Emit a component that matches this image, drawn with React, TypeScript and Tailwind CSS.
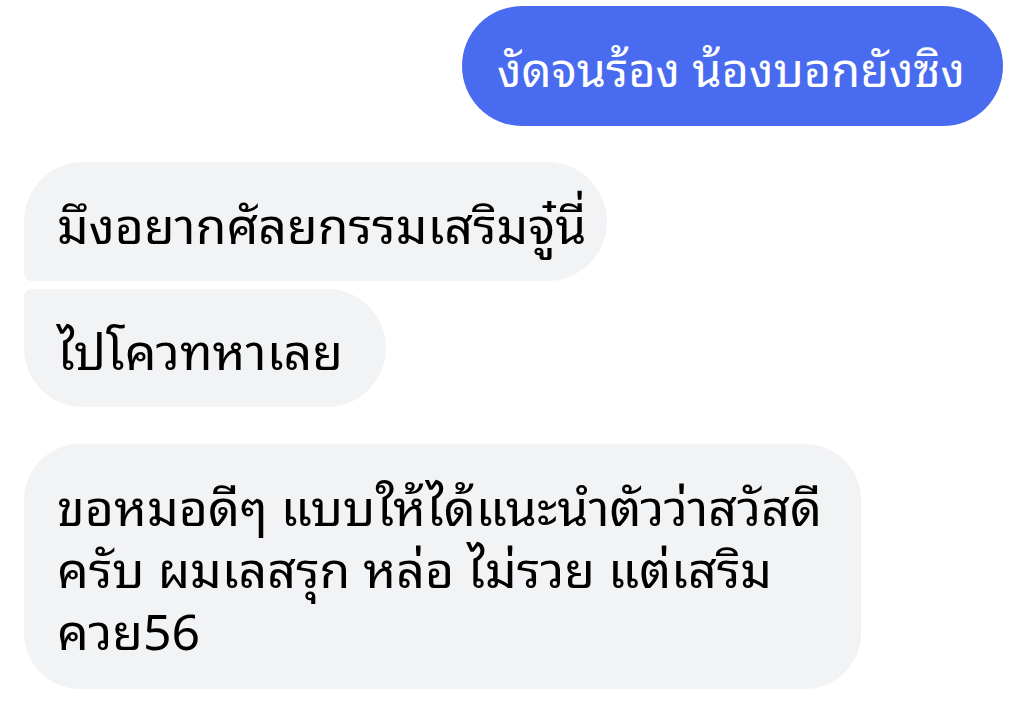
export default function App() {
  return (
    <div
      className="w-[1026px] h-[701px] bg-white overflow-hidden"
      style={{ fontFamily: '"Noto Sans Thai Looped", "Noto Sans Thai", "Noto Sans", sans-serif' }}
    >
      <div className="flex flex-col pt-[6px] px-[24px] pr-[23px]">
        {/* outgoing */}
        <div className="flex justify-end">
          <div className="h-[120px] w-[541px] rounded-[60px] bg-[#486bef] text-white text-[47px] leading-[62px] flex items-center px-[35px] whitespace-nowrap">
            งัดจนร้อง น้องบอกยังซิง
          </div>
        </div>

        {/* incoming group */}
        <div className="mt-[36px] flex flex-col gap-[8px] items-start">
          <div className="h-[119px] w-[583px] rounded-[60px] rounded-bl-[8px] bg-[#f2f3f5] text-black text-[50px] leading-[62px] flex items-center px-[33px] whitespace-nowrap">
            มึงอยากศัลยกรรมเสริมจู๋นี่
          </div>
          <div className="h-[118px] w-[362px] rounded-[60px] rounded-tl-[8px] bg-[#f2f3f5] text-black text-[50px] leading-[62px] flex items-center px-[33px] whitespace-nowrap">
            ไปโควทหาเลย
          </div>
        </div>

        <div className="mt-[37px] flex">
          <div className="h-[245px] w-[837px] rounded-[56px] bg-[#f2f3f5] text-black text-[50px] leading-[62px] px-[33px] py-[29px] whitespace-nowrap">
            ขอหมอดีๆ แบบให้ได้แนะนำตัวว่าสวัสดี
            <br />
            ครับ ผมเลสรุก หล่อ ไม่รวย แต่เสริม
            <br />
            ควย56
          </div>
        </div>
      </div>
    </div>
  );
}
